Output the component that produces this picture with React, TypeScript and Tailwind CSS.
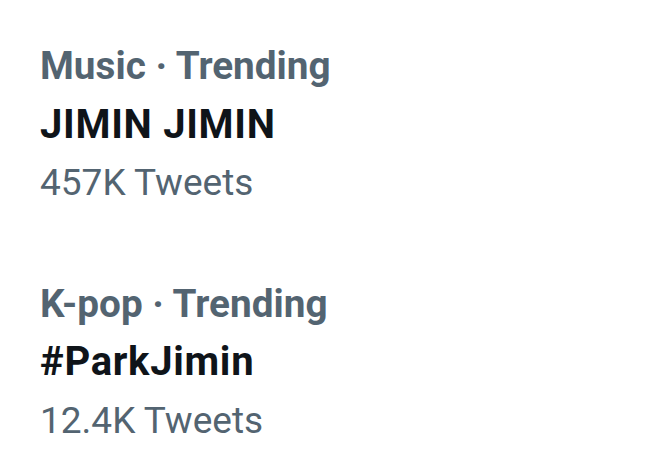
export default function App() {
  const trends = [
    { category: "Music · Trending", title: "JIMIN JIMIN", count: "457K Tweets" },
    { category: "K-pop · Trending", title: "#ParkJimin", count: "12.4K Tweets" },
  ];

  return (
    <div className="w-[669px] h-[460px] bg-white font-['Roboto',sans-serif] pl-[40px] pt-[37px] flex flex-col gap-[62px]">
      {trends.map((t) => (
        <div key={t.title} className="flex flex-col leading-[58.5px]">
          <span className="text-[38.7px] font-bold text-[#536471]">{t.category}</span>
          <span className="text-[40px] tracking-[0.7px] font-bold text-[#0f1419]">{t.title}</span>
          <span className="text-[37px] text-[#536471]">{t.count}</span>
        </div>
      ))}
    </div>
  );
}
